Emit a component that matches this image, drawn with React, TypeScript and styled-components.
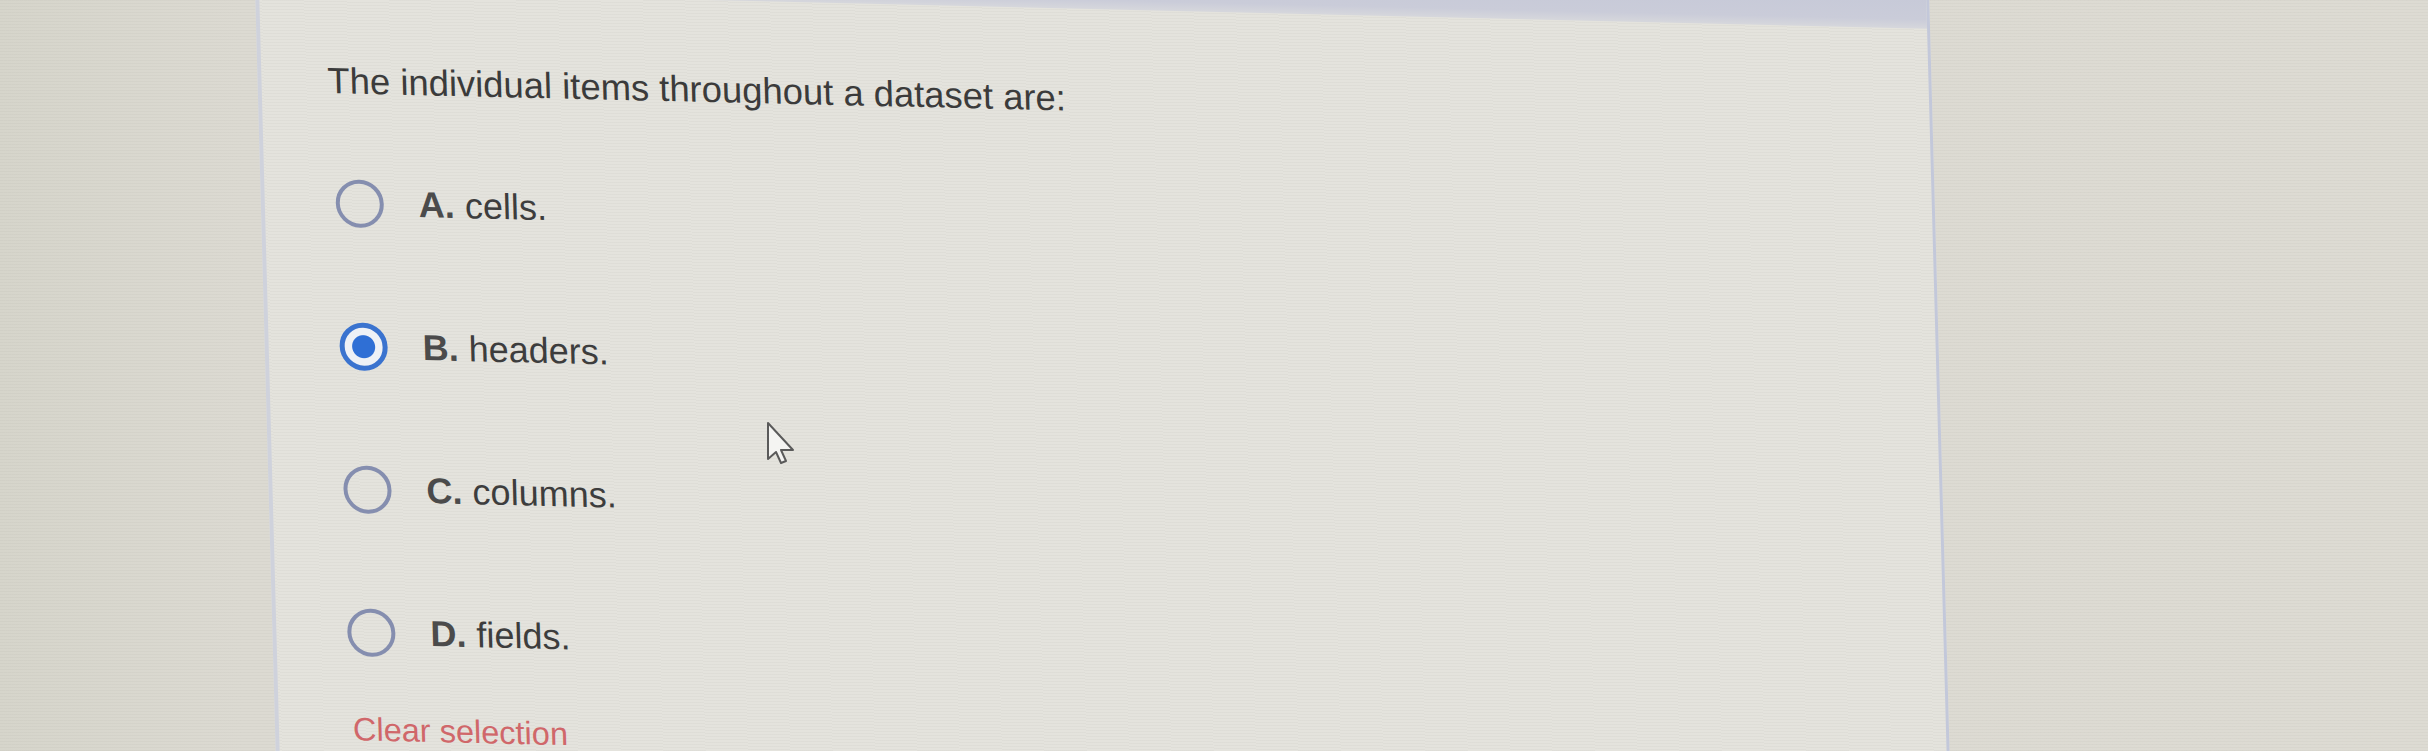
import React, { useState } from 'react';
import styled, { createGlobalStyle } from 'styled-components';

const GlobalStyle = createGlobalStyle`
  html, body {
    margin: 0;
    padding: 0;
    background: #dad8cf;
    font-family: 'Liberation Sans', Arial, sans-serif;
  }
`;

const scanlines = `repeating-linear-gradient(0deg, rgba(120, 118, 110, 0.05) 0px, rgba(120, 118, 110, 0.05) 1px, transparent 1px, transparent 3px)`;

const Page = styled.div`
  position: relative;
  display: flex;
  align-items: flex-start;
  height: 751px;
  overflow: hidden;
  padding-left: 258px;
  background: ${scanlines}, linear-gradient(90deg, #d6d5cb 0%, #dcdad2 10%, #dddbd3 100%);
`;

// the screen was photographed at a slight angle, so the card is sheared a little
const Card = styled.div`
  width: 1668px;
  min-height: 840px;
  margin-top: -46px;
  display: flex;
  flex-direction: column;
  background: ${scanlines}, #e4e3dd;
  border-left: 4px solid #cfd2dc;
  border-right: 3px solid #c3c8da;
  transform-origin: 70px 146px;
  transform: matrix(1, 0.0236, 0.027, 1, 0, 0);
`;

const TopBand = styled.div`
  height: 37px;
  flex-shrink: 0;
  background: linear-gradient(180deg, #c6c9d8 0%, #caccd9 75%, #d6d7dc 100%);
`;

const Body = styled.div`
  padding: 70px 0 0 66px;
  display: flex;
  flex-direction: column;
`;

const Question = styled.p`
  margin: 0;
  font-size: 36.4px;
  line-height: 40px;
  color: #3b3b3b;
`;

const Options = styled.div`
  margin-top: 77px;
  display: flex;
  flex-direction: column;
  gap: 93px;
`;

const Option = styled.label`
  display: flex;
  align-items: center;
  gap: 35px;
  height: 50px;
  padding-left: 5px;
  cursor: pointer;
`;

const Radio = styled.span<{ $checked: boolean }>`
  width: 48px;
  height: 48px;
  box-sizing: border-box;
  border-radius: 50%;
  flex-shrink: 0;
  border: ${(p) => (p.$checked ? '5px solid #3a73cf' : '4px solid #858eaf')};
  background: ${(p) =>
    p.$checked
      ? 'radial-gradient(circle, #2f6fd5 0 11px, #eef1f6 12px 100%)'
      : 'transparent'};
`;

const OptionText = styled.span`
  font-size: 36px;
  line-height: 40px;
  color: #3d3d3d;
`;

const Letter = styled.b`
  font-weight: 700;
  color: #4b4b4b;
`;

const ClearLink = styled.button`
  margin: 54px 0 0 8px;
  align-self: flex-start;
  padding: 0;
  border: none;
  background: none;
  font-family: 'Liberation Sans', Arial, sans-serif;
  font-size: 32.5px;
  line-height: 36px;
  color: #d0676a;
  cursor: pointer;
`;

const Pointer = styled.svg`
  position: absolute;
  left: 766px;
  top: 421px;
  width: 30px;
  height: 44px;
  pointer-events: none;
`;

const options = [
  { key: 'A', text: 'cells.' },
  { key: 'B', text: 'headers.' },
  { key: 'C', text: 'columns.' },
  { key: 'D', text: 'fields.' },
];

export default function App() {
  const [selected, setSelected] = useState<string | null>('B');

  return (
    <>
      <GlobalStyle />
      <Page>
        <Card>
          <TopBand />
          <Body>
            <Question>The individual items throughout a dataset are:</Question>
            <Options>
              {options.map((o) => (
                <Option key={o.key} onClick={() => setSelected(o.key)}>
                  <Radio $checked={selected === o.key} />
                  <OptionText>
                    <Letter>{o.key}.</Letter> {o.text}
                  </OptionText>
                </Option>
              ))}
            </Options>
            <ClearLink onClick={() => setSelected(null)}>Clear selection</ClearLink>
          </Body>
        </Card>
        <Pointer viewBox="0 0 30 44">
          <path
            d="M2 2 L2 38 L10 31 L15 42 L20 40 L15 29 L27 29 Z"
            fill="#f4f4f2"
            stroke="#5a5a5a"
            strokeWidth="2"
            strokeLinejoin="round"
          />
        </Pointer>
      </Page>
    </>
  );
}
